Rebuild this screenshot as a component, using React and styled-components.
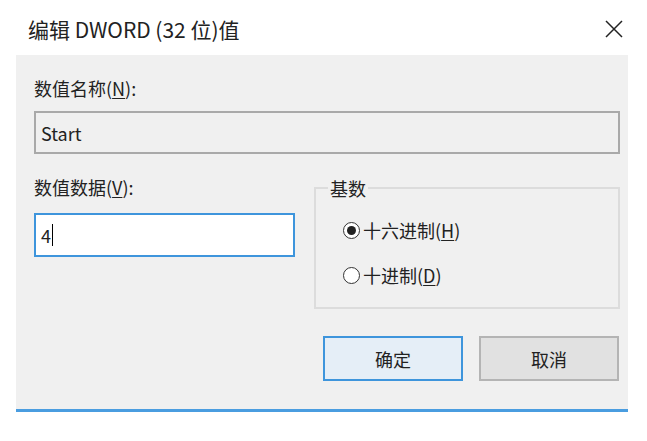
import React, { useState } from 'react'
import styled, { createGlobalStyle } from 'styled-components'

const Global = createGlobalStyle`
  html, body { margin: 0; padding: 0; background: #fff; }
  body { font-family: "Noto Sans CJK SC", "Microsoft YaHei", sans-serif; color: #1a1a1a; }
`

const Dialog = styled.div`
  width: 647px;
  height: 441px;
  background: #fff;
`

const TitleBar = styled.div`
  height: 55px;
  display: flex;
  align-items: center;
  justify-content: space-between;
  padding: 2px 22px 0 28px;
  box-sizing: border-box;
  font-size: 21px;
  color: #222;
`

const Close = styled.button`
  border: none;
  background: none;
  padding: 0;
  width: 22px;
  height: 22px;
  display: grid;
  place-items: center;
  cursor: pointer;
`

const Panel = styled.div`
  margin: 0 19px 0 16px;
  height: 357px;
  background: #f0f0f0;
  border-bottom: 3px solid #4a9de0;
  padding: 23px 8px 0 18px;
  box-sizing: border-box;
  display: flex;
  flex-direction: column;
`

const Label = styled.div`
  font-size: 18px;
  line-height: 20px;
  color: #222;
  u { text-decoration-thickness: 1px; text-underline-offset: 2px; }
`

const Field = styled.div`
  box-sizing: border-box;
  height: ${p => p.$h}px;
  width: ${p => (p.$w ? `${p.$w}px` : 'auto')};
  border: 2px solid ${p => (p.$focus ? '#3e95dc' : '#a9a9a9')};
  background: ${p => (p.$focus ? '#fff' : '#f0f0f0')};
  display: flex;
  align-items: center;
  padding-left: 5px;
  font-size: 18px;
  color: #222;
  margin-top: ${p => p.$mt}px;
`

const Caret = styled.span`
  display: inline-block;
  width: 1px;
  height: 22px;
  background: #000;
  margin-left: 1px;
`

const Row = styled.div`
  display: flex;
  margin-top: 23px;
  gap: 19px;
`

const Column = styled.div`
  display: flex;
  flex-direction: column;
`

const Group = styled.fieldset`
  margin: 0;
  margin-top: 1px;
  padding: 20px 0 0 27px;
  width: 306px;
  height: 131px;
  box-sizing: border-box;
  border: 2px solid #dcdcdc;
  display: flex;
  flex-direction: column;
  gap: 21px;
  legend {
    font-size: 18px;
    line-height: 20px;
    padding: 0 2px;
    margin-left: -15px;
    color: #222;
  }
`

const Option = styled.label`
  display: flex;
  align-items: center;
  gap: 3px;
  font-size: 18px;
  line-height: 24px;
  color: #222;
  cursor: pointer;
  u { text-decoration-thickness: 1px; text-underline-offset: 2px; }
`

const Dot = styled.span`
  width: 17px;
  height: 17px;
  border-radius: 50%;
  border: 1.5px solid #333;
  background: #fff;
  box-sizing: border-box;
  display: grid;
  place-items: center;
  &::after {
    content: '';
    width: 9px;
    height: 9px;
    border-radius: 50%;
    background: ${p => (p.$on ? '#222' : 'transparent')};
  }
`

const Buttons = styled.div`
  display: flex;
  justify-content: flex-end;
  gap: 16px;
  margin-top: 27px;
  padding-right: 1px;
`

const Button = styled.button`
  width: 140px;
  height: 45px;
  box-sizing: border-box;
  border: 2px solid ${p => (p.$primary ? '#3e95dc' : '#b4b4b4')};
  background: ${p => (p.$primary ? '#e5eef7' : '#e1e1e1')};
  font-family: inherit;
  font-size: 18px;
  color: #222;
  cursor: pointer;
`

export default function App() {
  const [base, setBase] = useState('hex')
  return (
    <Dialog>
      <Global />
      <TitleBar>
        <span>编辑 DWORD (32 位)值</span>
        <Close aria-label="关闭">
          <svg width="18" height="18" viewBox="0 0 18 18">
            <path d="M1 1L17 17M17 1L1 17" stroke="#222" strokeWidth="1.5" />
          </svg>
        </Close>
      </TitleBar>
      <Panel>
        <Label>数值名称(<u>N</u>):</Label>
        <Field $h={43} $mt={13}>Start</Field>
        <Row>
          <Column>
            <Label>数值数据(<u>V</u>):</Label>
            <Field $h={44} $w={261} $mt={16} $focus>4<Caret /></Field>
          </Column>
          <Group>
            <legend>基数</legend>
            <Option onClick={() => setBase('hex')}>
              <Dot $on={base === 'hex'} />
              <span>十六进制(<u>H</u>)</span>
            </Option>
            <Option onClick={() => setBase('dec')}>
              <Dot $on={base === 'dec'} />
              <span>十进制(<u>D</u>)</span>
            </Option>
          </Group>
        </Row>
        <Buttons>
          <Button $primary>确定</Button>
          <Button>取消</Button>
        </Buttons>
      </Panel>
    </Dialog>
  )
}
